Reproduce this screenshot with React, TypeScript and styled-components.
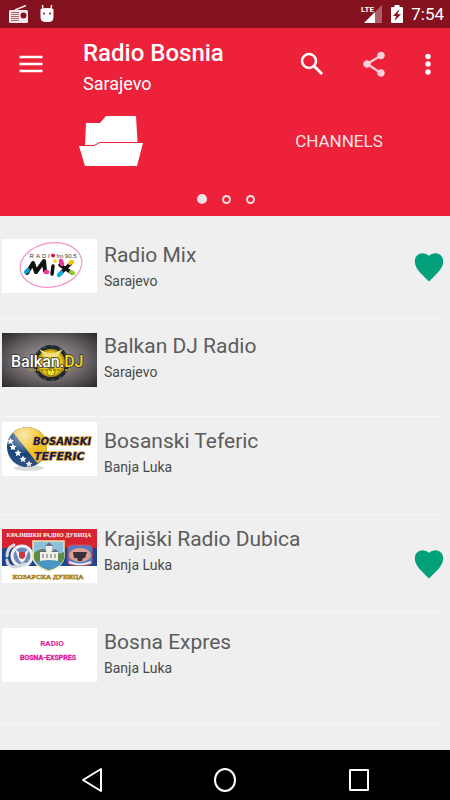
import React from "react";
import styled, { createGlobalStyle } from "styled-components";

const GlobalStyle = createGlobalStyle`
  *, *::before, *::after { box-sizing: border-box; }
  html, body, #root { height: 100%; }
  body {
    margin: 0;
    background: #efefef;
    font-family: Roboto, "Liberation Sans", sans-serif;
  }
`;

const Screen = styled.div`
  min-height: 100%;
  display: flex;
  flex-direction: column;
`;

const StatusBar = styled.div`
  height: 28px;
  padding: 0 6px 0 8px;
  display: flex;
  align-items: center;
  justify-content: space-between;
  background: #84121e;
  color: #fff;
`;

const StatusGroup = styled.div<{ $gap: number }>`
  display: flex;
  align-items: center;
  gap: ${(p) => p.$gap}px;
  svg { display: block; }
`;

const Clock = styled.time`
  font-size: 17px;
  line-height: 28px;
`;

const Header = styled.header`
  background: #ed2139;
  color: #fff;
`;

const AppBar = styled.div`
  height: 72px;
  display: flex;
  align-items: center;
`;

const IconButton = styled.button<{ $width: number }>`
  width: ${(p) => p.$width}px;
  height: 48px;
  padding: 0;
  border: 0;
  background: none;
  color: inherit;
  display: flex;
  align-items: center;
  justify-content: center;
  flex: none;
  cursor: pointer;
`;

const Titles = styled.div`
  flex: 1;
  min-width: 0;
  padding: 8px 0 0 22px;
`;

const AppTitle = styled.h1`
  margin: 0;
  font-size: 24px;
  line-height: 32px;
  font-weight: 500;
  white-space: nowrap;
`;

const AppSubtitle = styled.p`
  margin: 0;
  font-size: 18px;
  line-height: 30px;
`;

const Tabs = styled.nav`
  height: 82px;
  display: grid;
  grid-template-columns: 1fr 1fr;
  column-gap: 6px;
`;

const Tab = styled.button`
  border: 0;
  padding: 0;
  background: none;
  color: #fde3e6;
  font: inherit;
  font-size: 17px;
  display: flex;
  align-items: center;
  justify-content: center;
  cursor: pointer;
`;

const Pager = styled.div`
  height: 34px;
  padding-left: 1px;
  display: flex;
  align-items: center;
  justify-content: center;
  gap: 15px;
`;

const PagerDot = styled.button<{ $active?: boolean }>`
  width: ${(p) => (p.$active ? 10 : 9)}px;
  height: ${(p) => (p.$active ? 10 : 9)}px;
  padding: 0;
  border-radius: 50%;
  border: 2px solid #f6dfe2;
  background: ${(p) => (p.$active ? "#f6dfe2" : "transparent")};
`;

const StationList = styled.ul`
  flex: 1;
  margin: 0;
  padding: 0 6px 0 0;
  list-style: none;
`;

const Row = styled.li<{ $height: number }>`
  min-height: ${(p) => p.$height}px;
  padding-left: 2px;
  display: flex;
  border-bottom: 1px solid #f6f6f6;
`;

const Logo = styled.div<{ $top: number }>`
  flex: none;
  width: 95px;
  margin-right: 7px;
  padding-top: ${(p) => p.$top}px;
  svg { display: block; }
`;

const Info = styled.div<{ $top: number }>`
  flex: 1;
  min-width: 0;
  padding-top: ${(p) => p.$top}px;
`;

const StationName = styled.h2`
  margin: 0;
  font-size: 21px;
  line-height: 28px;
  font-weight: 400;
  color: #5c5c5c;
`;

const City = styled.p`
  margin: 0;
  font-size: 14px;
  line-height: 24px;
  color: #4a4a4a;
`;

const HeartButton = styled.button`
  align-self: center;
  width: 30px;
  height: 32px;
  border: 0;
  padding: 0;
  background: none;
  cursor: pointer;
  svg { display: block; }
`;

const NavBar = styled.nav`
  height: 50px;
  padding: 9px 24px 0 25px;
  display: grid;
  grid-template-columns: repeat(3, 1fr);
  background: #000;
  color: #fff;
`;

const NavButton = styled.button`
  border: 0;
  padding: 0;
  background: none;
  color: inherit;
  display: flex;
  align-items: center;
  justify-content: center;
  cursor: pointer;
`;

const RadioIcon = () => (
  <svg width="21" height="20" viewBox="0 0 21 20" fill="none">
    <path d="M7 6 18 1.5" stroke="#f8eaec" strokeWidth="1.4" />
    <rect x="1" y="6" width="19" height="13" rx="1.5" fill="#f8eaec" />
    <path d="M3 8.500h8M3 10.500h8M3 12.500h8M3 14.500h8M3 16.500h8" stroke="#a8636b" strokeWidth="1" />
    <circle cx="15.500" cy="11.500" r="3" fill="#84121e" />
  </svg>
);

const RobotIcon = () => (
  <svg width="16" height="20" viewBox="0 0 16 20">
    <path d="M4 6 3.400 1M12 6l.6-5" stroke="#fff" strokeWidth="1.400" />
    <path d="M1.500 5q6.500-2 13 0v8q0 5-5 5h-3q-5 0-5-5z" fill="#fff" />
    <circle cx="5" cy="9.500" r="1" fill="#84121e" />
    <circle cx="11" cy="9.500" r="1" fill="#84121e" />
  </svg>
);

const SignalIcon = () => (
  <svg width="23" height="20" viewBox="0 0 23 20">
    <path d="M22 1v18H4z" fill="#ad606a" />
    <path d="M15 8v11H4z" fill="#fff" />
    <text x="1" y="8" fontFamily="Roboto" fontSize="8" fontWeight="700" fill="#fff" stroke="#84121e" strokeWidth="1" paintOrder="stroke">LTE</text>
  </svg>
);

const BatteryIcon = () => (
  <svg width="12" height="20" viewBox="0 0 12 20">
    <path d="M3.500 1h5v2H11q1 0 1 1v14q0 1-1 1H1q-1 0-1-1V4q0-1 1-1h2.500z" fill="#fff" />
    <path d="M8.500 5 2 12h3.300L3.500 17 10 10.200H6.500z" fill="#84121e" />
  </svg>
);

const MenuIcon = () => (
  <svg width="24" height="18" viewBox="0 0 24 18">
    <path d="M.5 2h23M.5 9h23M.5 16h23" stroke="#fff" strokeWidth="2.400" />
  </svg>
);

const SearchIcon = () => (
  <svg width="24" height="24" viewBox="0 0 24 24" fill="none" stroke="#fff">
    <circle cx="9" cy="9" r="7" strokeWidth="2.500" />
    <path d="m14 14 8 8" strokeWidth="3" />
  </svg>
);

const ShareIcon = () => (
  <svg width="24" height="28" viewBox="0 0 24 28" fill="#fbd0d6" stroke="#fbd0d6">
    <path d="M19 5.500 5 14l14 9" fill="none" strokeWidth="2.200" />
    <circle cx="19" cy="5.500" r="3.300" />
    <circle cx="5" cy="14" r="3.300" />
    <circle cx="19" cy="23" r="3.300" />
  </svg>
);

const MoreIcon = () => (
  <svg width="8" height="24" viewBox="0 0 8 24" fill="#fff">
    <circle cx="4" cy="4.500" r="2.700" />
    <circle cx="4" cy="12" r="2.700" />
    <circle cx="4" cy="20" r="2.700" />
  </svg>
);

const FolderIcon = () => (
  <svg width="66" height="52" viewBox="0 0 66 52" fill="#fff">
    <path d="M8 8h14l6-7h30l1.500 26H22l-6 3H7z" />
    <path d="M1 31h15l6-3h43l-6 23H7z" />
  </svg>
);

const HeartIcon = () => (
  <svg width="30" height="30" viewBox="0 0 30 30" fill="#03a07c">
    <path d="M15 29.500C10 24 .8 17.500.8 9.500.8 4.800 4 1.200 8.300 1.200c2.700 0 5.200 1 6.700 2.800 1.500-1.800 4-2.800 6.700-2.800 4.300 0 7.500 3.600 7.500 8.300 0 8-9.200 14.500-14.200 20z" />
  </svg>
);

const MixLogo = () => (
  <svg width="95" height="54" viewBox="0 0 95 54">
    <rect width="95" height="54" fill="#fff" />
    <ellipse cx="49" cy="26" rx="31" ry="22" fill="none" stroke="#f294c8" strokeWidth="1.200" transform="rotate(-10 49 26)" />
    <text y="18.500" fontFamily="Liberation Sans" fontSize="6" fill="#333">
      <tspan x="27.500">R</tspan><tspan x="34">A</tspan><tspan x="40">D</tspan><tspan x="46">I</tspan><tspan x="54.500">fm 90.5</tspan>
    </text>
    <circle cx="51" cy="16.500" r="2" fill="#d6165c" />
    <g fill="none" strokeLinecap="round" strokeLinejoin="round">
      <path d="m25 34 6-10 3 9 8-11 1 10" stroke="#111" strokeWidth="4" />
      <path d="m51 27-1 8m8-9 12 8M70 23 58 35" stroke="#111" strokeWidth="3.500" />
      <path d="m24 33 2-2" stroke="#00a0d2" strokeWidth="4" />
      <path d="m57 36 2-2" stroke="#18a9df" strokeWidth="4.500" />
      <path d="m59 22 1 3M44 33h1" stroke="#e83a99" strokeWidth="4.500" />
      <path d="m68 24 2-1" stroke="#f4c400" strokeWidth="4" />
      <path d="m69 33 2 1" stroke="#8bd02a" strokeWidth="4" />
    </g>
    <circle cx="53" cy="22" r="1.800" fill="#eed400" />
  </svg>
);

const BalkanLogo = () => (
  <svg width="95" height="54" viewBox="0 0 95 54">
    <defs>
      <radialGradient id="steel" r=".7">
        <stop offset="0" stopColor="#a8a0a4" />
        <stop offset=".55" stopColor="#6b6568" />
        <stop offset="1" stopColor="#292629" />
      </radialGradient>
    </defs>
    <rect width="95" height="54" fill="url(#steel)" />
    <circle cx="49" cy="30" r="16" fill="#b6990f" stroke="#22282b" strokeWidth="4" />
    <circle cx="49" cy="30" r="12" fill="#e4c51b" />
    <circle cx="49" cy="30" r="17" fill="none" stroke="#68777b" strokeWidth="1" strokeDasharray="2 6" />
    <path d="m37 16 8 4h8l8-4-6 8H43z" fill="#f2df84" />
    <circle cx="49" cy="39" r="4" fill="#f2df2b" stroke="#8d7713" strokeWidth="1" />
    <text x="9" y="34" fontFamily="Roboto" fontSize="16" fontWeight="500" fill="#fff" stroke="#303030" strokeWidth="1.500" paintOrder="stroke">
      Balkan.<tspan fill="#f2d51b">DJ</tspan>
    </text>
    <path d="M27 37h42" stroke="#a88c12" strokeWidth="2" strokeDasharray="3 1" />
  </svg>
);

const star = "m0-2.600.8 1.700 1.900.2-1.400 1.300.4 1.900L0 1.600l-1.700.9.400-1.900-1.400-1.300 1.900-.2z";

const TefericLogo = () => (
  <svg width="95" height="54" viewBox="0 0 95 54">
    <defs>
      <clipPath id="globe"><circle cx="25" cy="25" r="20" /></clipPath>
      <radialGradient id="shine" cx=".4" cy=".2" r=".9">
        <stop offset="0" stopColor="#fff" stopOpacity=".65" />
        <stop offset=".5" stopColor="#fff" stopOpacity="0" />
        <stop offset="1" stopColor="#001030" stopOpacity=".4" />
      </radialGradient>
    </defs>
    <rect width="95" height="54" fill="#fff" />
    <ellipse cx="27" cy="46" rx="15" ry="3" fill="#ddd" />
    <g clipPath="url(#globe)">
      <rect x="4" y="4" width="44" height="44" fill="#144078" />
      <path d="M10 9 17 4h28v30l-9 8z" fill="#efbf1d" />
      <g fill="#fff">
        <path transform="translate(8.500 19) scale(1.300)" d={star} />
        <path transform="translate(11 25) scale(1.300)" d={star} />
        <path transform="translate(16 31) scale(1.300)" d={star} />
        <path transform="translate(21 37) scale(1.300)" d={star} />
        <path transform="translate(27 42) scale(1.300)" d={star} />
      </g>
      <rect x="4" y="4" width="44" height="44" fill="url(#shine)" />
    </g>
    <g fontFamily="DejaVu Sans" fontSize="11" fontWeight="700" fontStyle="italic" fill="#181a4b" stroke="#e0a529" strokeWidth="1.500" paintOrder="stroke">
      <text x="31" y="23" fontSize="10">BOSANSKI</text>
      <text x="32" y="38">TEFERIC</text>
    </g>
  </svg>
);

const DubicaLogo = () => (
  <svg width="95" height="54" viewBox="0 0 95 54">
    <rect width="95" height="54" fill="#fff" />
    <rect width="95" height="19" fill="#d52331" />
    <rect y="19" width="95" height="18" fill="#1e4690" />
    <circle cx="20" cy="27" r="10" fill="#6e86bb" stroke="#f0f1f3" strokeWidth="3" />
    <path d="m13 20 5 4h4l5-4-4 11-3 3-3-3z" fill="#f5f5f6" />
    <path d="M17 23h6v5q-3 4-6 0z" fill="#c83b45" />
    <path d="M5 27q0-8 7-11M5 31q0 7 9 7l9-3" fill="none" stroke="#d4d7dc" strokeWidth="3" strokeLinecap="round" />
    <path d="M31 12h31v15q0 10-15.500 15Q31 37 31 27z" fill="#8dbfd8" stroke="#eee3a5" strokeWidth="1.500" />
    <path d="M32 24q8-7 15-2t15 1v7q-2 7-15 11-12-4-15-11z" fill="#5f8c4d" />
    <path d="M38 32V22h6v-6l3-3 3 3v6h6v10z" fill="#f1efe5" />
    <path d="m43 17 4-4 4 4zM37 23l4-3 4 3zm12 0 4-3 4 3z" fill="#656e82" />
    <path d="M41 25v4m4-4v4m4-4v4m4-4v4" stroke="#656e82" strokeWidth="1" />
    <path d="M34 33q13-4 26 0-3 5-13 8-10-3-13-8z" fill="#4a96c0" />
    <rect x="66" y="16" width="24" height="20" rx="3" fill="#527bc3" stroke="#e4434e" strokeWidth="1" />
    <ellipse cx="78" cy="26" rx="11" ry="7" fill="#dda090" />
    <path d="M71 23h14l-2 6h-2l-1 3h-4l-1-3h-3z" fill="#382f3a" />
    <path d="M67 33q11 5 22 0" fill="none" stroke="#e8e6ea" strokeWidth="2" />
    <g fontFamily="Liberation Serif" fontWeight="700">
      <text x="47" y="8" textAnchor="middle" fontSize="6" fill="#fff">КРАЈИШКИ РАДИО ДУБИЦА</text>
      <text x="46" y="50" textAnchor="middle" fontSize="7" fill="#e7bd24" stroke="#9b761b" strokeWidth=".5">КОЗАРСКА ДУБИЦА</text>
    </g>
  </svg>
);

const ExpresLogo = () => (
  <svg width="95" height="54" viewBox="0 0 95 54">
    <rect width="95" height="54" fill="#fff" />
    <g fontFamily="Roboto" fontWeight="700" fill="#e6129a" textAnchor="middle">
      <text x="50" y="18" fontSize="8">RADIO</text>
      <text x="46" y="32" fontSize="7" stroke="#e6129a" strokeWidth=".3">BOSNA-EXSPRES</text>
    </g>
  </svg>
);

interface Station {
  name: string;
  city: string;
  logo: React.ReactNode;
  height: number;
  logoTop: number;
  infoTop: number;
  favourite?: boolean;
}

const stations: Station[] = [
  { name: "Radio Mix", city: "Sarajevo", logo: <MixLogo />, height: 103, logoTop: 23, infoTop: 25, favourite: true },
  { name: "Balkan DJ Radio", city: "Sarajevo", logo: <BalkanLogo />, height: 98, logoTop: 14, infoTop: 13 },
  { name: "Bosanski Teferic", city: "Banja Luka", logo: <TefericLogo />, height: 98, logoTop: 5, infoTop: 10 },
  { name: "Krajiški Radio Dubica", city: "Banja Luka", logo: <DubicaLogo />, height: 98, logoTop: 14, infoTop: 10, favourite: true },
  { name: "Bosna Expres", city: "Banja Luka", logo: <ExpresLogo />, height: 112, logoTop: 15, infoTop: 15 },
];

export default function App() {
  return (
    <Screen>
      <GlobalStyle />
      <StatusBar>
        <StatusGroup $gap={10}>
          <RadioIcon />
          <RobotIcon />
        </StatusGroup>
        <StatusGroup $gap={8}>
          <SignalIcon />
          <BatteryIcon />
          <Clock>7:54</Clock>
        </StatusGroup>
      </StatusBar>
      <Header>
        <AppBar>
          <IconButton $width={61} aria-label="Menu"><MenuIcon /></IconButton>
          <Titles>
            <AppTitle>Radio Bosnia</AppTitle>
            <AppSubtitle>Sarajevo</AppSubtitle>
          </Titles>
          <IconButton $width={62} aria-label="Search"><SearchIcon /></IconButton>
          <IconButton $width={62} aria-label="Share"><ShareIcon /></IconButton>
          <IconButton $width={45} aria-label="More options"><MoreIcon /></IconButton>
        </AppBar>
        <Tabs>
          <Tab aria-label="Folder"><FolderIcon /></Tab>
          <Tab>CHANNELS</Tab>
        </Tabs>
        <Pager>
          <PagerDot $active aria-label="Page 1" />
          <PagerDot aria-label="Page 2" />
          <PagerDot aria-label="Page 3" />
        </Pager>
      </Header>
      <StationList>
        {stations.map((s) => (
          <Row key={s.name} $height={s.height}>
            <Logo $top={s.logoTop}>{s.logo}</Logo>
            <Info $top={s.infoTop}>
              <StationName>{s.name}</StationName>
              <City>{s.city}</City>
            </Info>
            {s.favourite && (
              <HeartButton aria-label={`Remove ${s.name} from favourites`}><HeartIcon /></HeartButton>
            )}
          </Row>
        ))}
      </StationList>
      <NavBar>
        <NavButton aria-label="Back">
          <svg width="22" height="26" viewBox="0 0 22 26" fill="none" stroke="#fff" strokeWidth="2" strokeLinejoin="round">
            <path d="M20 2v22L2 13z" />
          </svg>
        </NavButton>
        <NavButton aria-label="Home">
          <svg width="24" height="26" viewBox="0 0 24 26" fill="none" stroke="#fff" strokeWidth="2">
            <ellipse cx="12" cy="13" rx="10" ry="11" />
          </svg>
        </NavButton>
        <NavButton aria-label="Recent apps">
          <svg width="22" height="24" viewBox="0 0 22 24" fill="none" stroke="#fff" strokeWidth="2" strokeLinejoin="round">
            <rect x="2" y="2" width="18" height="20" />
          </svg>
        </NavButton>
      </NavBar>
    </Screen>
  );
}
